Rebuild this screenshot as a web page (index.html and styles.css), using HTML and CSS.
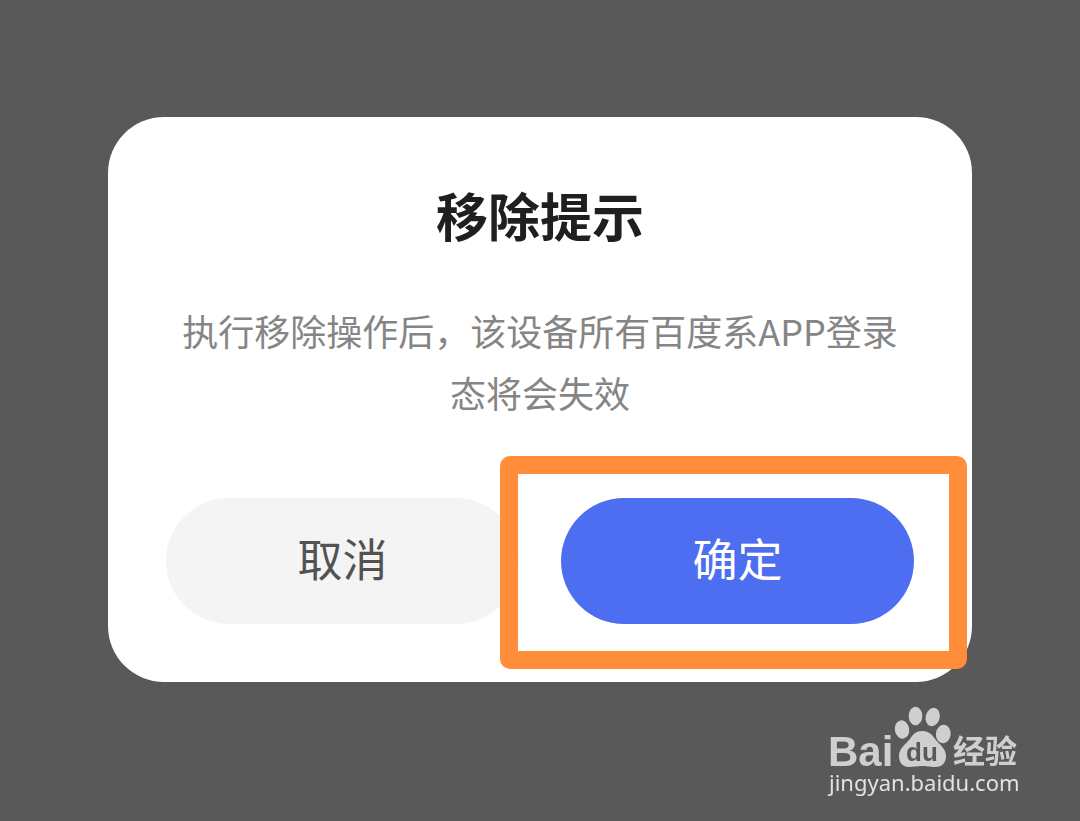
FILE: index.html
```html
<!DOCTYPE html>
<html lang="zh-CN">
<head>
    <meta charset="UTF-8">
    <meta name="viewport" content="width=device-width, initial-scale=1">
    <title>移除提示</title>
    <link rel="stylesheet" href="styles.css">
</head>
<body>
    <main class="mask">
        <div class="dialog" role="dialog" aria-labelledby="dialogTitle">
            <h1 class="title" id="dialogTitle">移除提示</h1>
            <p class="message">执行移除操作后，该设备所有百度系APP登录态将会失效</p>
            <div class="actions">
                <button type="button" class="btn cancel">取消</button>
                <div class="marked">
                    <button type="button" class="btn confirm">确定</button>
                    <span class="mark"></span>
                </div>
            </div>
        </div>
    </main>

    <!-- 水印 -->
    <svg class="watermark" viewBox="0 0 200 100" role="img" aria-label="Baidu 经验">
        <g class="logo">
            <text class="bai" x="8" y="66">Bai</text>
            <ellipse cx="82" cy="29.5" rx="7.2" ry="9.2" transform="rotate(-10 82 29.5)"/>
            <ellipse cx="95.5" cy="16" rx="6.8" ry="9.3"/>
            <ellipse cx="112.7" cy="17" rx="7" ry="9.3" transform="rotate(14 112.7 17)"/>
            <ellipse cx="123.3" cy="34" rx="7.4" ry="9.2" transform="rotate(6 123.3 34)"/>
            <path d="M102 31C108 31 112 34 115 39C119 44 126 48 126 56C126 64 121 67 115 67C109 67 107 66 102 66C97 66 94 67 89 67C83 67 79 63 79 56C79 48 86 44 90 39C93 34 96 31 102 31Z"/>
            <text class="jingyan" x="133" y="63">经验</text>
        </g>
        <text class="du" x="86" y="61">du</text>
        <text class="site" x="9" y="91">jingyan.baidu.com</text>
    </svg>
</body>
</html>
```
FILE: styles.css
```css
* { box-sizing: border-box; }
body { margin: 0; background: #595959; font-family: "Noto Sans CJK SC", sans-serif; }

.mask { display: flex; align-items: center; justify-content: center; min-height: 100vh; padding-bottom: 22px; }
.dialog { width: 80%; padding: 60px 58px 58px; background: #fff; border-radius: 56px; text-align: center; }
.title { margin: 0; font-size: 52px; line-height: 76px; font-weight: bold; color: #1f1f1f; }
.message { margin: 46px 0 75px; font-size: 36px; line-height: 62px; color: #858585; }

.actions { display: flex; gap: 42px; }
.btn { flex: 1; height: 126px; padding: 0 0 8px; border: none; border-radius: 63px; font-family: inherit; font-size: 45px; cursor: pointer; }
.cancel { background: #f4f4f4; color: #525252; }
.confirm { background: #4e6ef2; color: #fff; }

/* 橙色标注框 */
.marked { flex: 1; display: flex; position: relative; }
.mark { position: absolute; top: -42px; right: -53px; bottom: -45px; left: -61px; border: 18px solid #ff8d3a; border-radius: 10px; pointer-events: none; }

.watermark { position: fixed; right: 60px; bottom: 21px; width: 200px; height: 100px; overflow: visible; }
.logo { fill: #cfcfcf; }
.bai { font: bold 42px "Liberation Sans", sans-serif; }
.jingyan { font: bold 32px "Noto Sans CJK SC", sans-serif; }
.du { font: bold 26px "Liberation Sans", sans-serif; fill: #595959; }
.site { font: 22px "Noto Sans", sans-serif; fill: #e2e2e2; }
```
